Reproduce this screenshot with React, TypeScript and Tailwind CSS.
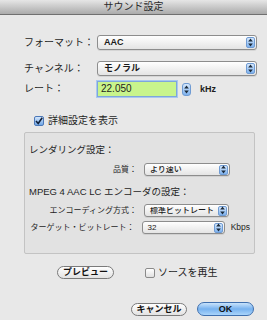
const font = "font-['Liberation_Sans','Noto_Sans_CJK_JP',sans-serif]";

function Arrows() {
  return (
    <svg width="5" height="9" viewBox="0 0 5 9">
      <path d="M2.5 0.5 L4.8 3.5 L0.2 3.5 Z" fill="#1c2a3a" />
      <path d="M2.5 8.5 L4.8 5.5 L0.2 5.5 Z" fill="#1c2a3a" />
    </svg>
  );
}

function Popup({ value, className = "", small = false }: { value: string; className?: string; small?: boolean }) {
  return (
    <div
      className={`flex items-center rounded-[3px] border border-[#8d8d8d] bg-gradient-to-b from-white to-[#e4e4e4] shadow-[0_1px_0_rgba(0,0,0,0.08)] ${small ? "h-[13px]" : "h-[15px]"} ${className}`}
    >
      <span className={`flex-1 whitespace-nowrap overflow-hidden text-[#1a1a1a] leading-none ${small ? "pl-[5px] text-[8px] font-medium" : "pl-[6px] text-[9px] font-bold"}`}>{value}</span>
      <span
        className={`flex items-center justify-center mr-[1px] w-[9px] rounded-[2px] bg-gradient-to-b from-[#d6e8fc] to-[#7eb2ee] border border-[#6f9bd3] ${small ? "h-[10px]" : "h-[11px]"}`}
      >
        <Arrows />
      </span>
    </div>
  );
}

function PillButton({ label, className = "", primary = false }: { label: string; className?: string; primary?: boolean }) {
  return (
    <button
      className={`flex items-center justify-center rounded-full border text-[9px] font-bold leading-none text-[#111] ${
        primary
          ? "border-[#3f6fae] bg-gradient-to-b from-[#c9e3fb] via-[#77b2ef] to-[#a9d4fb]"
          : "border-[#7a7a7a] bg-gradient-to-b from-white to-[#e2e2e2]"
      } ${className}`}
    >
      {label}
    </button>
  );
}

export default function App() {
  return (
    <div className={`w-[267px] h-[320px] overflow-hidden bg-[#e8e8e8] text-[#1e1e1e] ${font}`}>
      <div className="h-[15px] flex items-center justify-center bg-gradient-to-b from-[#e6e6e6] to-[#ababab] border-b border-[#707070] text-[10px] leading-none text-[#2a2a2a]">
        サウンド設定
      </div>

      <div className="pl-[24px] pr-[10px]">
        <div className="mt-[20px] flex items-center h-[15px]">
          <span className="w-[73px] text-[10px] leading-none">フォーマット：</span>
          <Popup value="AAC" className="w-[160px]" />
        </div>
        <div className="mt-[11px] flex items-center h-[15px]">
          <span className="w-[73px] text-[10px] leading-none">チャンネル：</span>
          <Popup value="モノラル" className="w-[160px]" />
        </div>
        <div className="mt-[5px] flex items-center h-[16px]">
          <span className="w-[73px] text-[10px] leading-none">レート：</span>
          <div className="w-[80px] h-[16px] bg-[#c8f48c] border border-[#7ea6dc] shadow-[0_0_0_1px_#a9c8f0] flex items-center pl-[3px] text-[10px] leading-none">
            22.050
          </div>
          <span className="ml-[5px] flex items-center justify-center w-[9px] h-[13px] rounded-[3px] bg-gradient-to-b from-[#d6e8fc] to-[#7eb2ee] border border-[#6f9bd3]">
            <Arrows />
          </span>
          <span className="ml-[9px] text-[9px] font-bold leading-none">kHz</span>
        </div>

        <div className="mt-[18px] flex items-center h-[12px] pl-[10px]">
          <span className="w-[10px] h-[10px] rounded-[2px] border border-[#4c78b8] bg-gradient-to-b from-[#d3e6fb] to-[#6fa6e6] flex items-center justify-center">
            <svg width="8" height="8" viewBox="0 0 8 8">
              <path d="M1 4 L3.2 6.5 L7.2 0.8" fill="none" stroke="#10203a" strokeWidth="1.6" />
            </svg>
          </span>
          <span className="ml-[4px] text-[10px] leading-none">詳細設定を表示</span>
        </div>

        <div className="mt-[5px] w-[231px] h-[122px] border border-[#c3c3c3] rounded-[2px] bg-[#e2e2e2] px-[4px] pt-[11px]">
          <div className="h-[12px] flex items-center text-[9.5px] leading-none">レンダリング設定：</div>
          <div className="mt-[7px] flex items-center h-[13px]">
            <span className="w-[108px] whitespace-nowrap text-right text-[8px] leading-none">品質：</span>
            <Popup value="より速い" small className="ml-[7px] w-[86px]" />
          </div>
          <div className="mt-[10px] h-[12px] flex items-center text-[9.5px] leading-none">MPEG 4 AAC LC エンコーダの設定：</div>
          <div className="mt-[6px] flex items-center h-[13px]">
            <span className="w-[108px] whitespace-nowrap text-right text-[8px] leading-none">エンコーディング方式：</span>
            <Popup value="標準ビットレート" small className="ml-[7px] w-[85px]" />
          </div>
          <div className="mt-[4px] flex items-center h-[13px]">
            <span className="w-[108px] whitespace-nowrap text-right text-[8px] leading-none">ターゲット・ビットレート：</span>
            <Popup value="32" small className="ml-[7px] w-[85px]" />
            <span className="ml-[6px] text-[8.5px] font-medium leading-none">Kbps</span>
          </div>
        </div>

        <div className="mt-[12px] flex items-center h-[13px]">
          <PillButton label="プレビュー" className="ml-[33px] w-[57px] h-[13px]" />
          <span className="ml-[31px] w-[10px] h-[10px] rounded-[2px] border border-[#8a8a8a] bg-gradient-to-b from-white to-[#e0e0e0]" />
          <span className="ml-[3px] text-[10px] leading-none">ソースを再生</span>
        </div>

        <div className="mt-[23px] flex items-center h-[14px]">
          <PillButton label="キャンセル" className="ml-[107px] w-[56px] h-[13px]" />
          <PillButton label="OK" primary className="ml-[10px] w-[57px] h-[14px]" />
        </div>
      </div>
    </div>
  );
}
